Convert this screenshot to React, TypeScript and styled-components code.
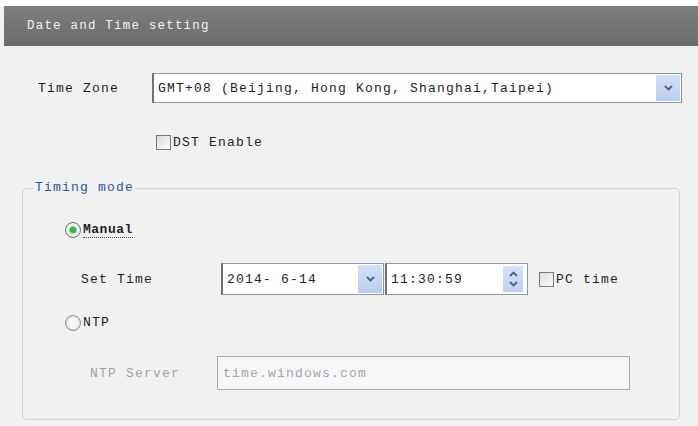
import styled, { createGlobalStyle } from 'styled-components';

const GlobalStyle = createGlobalStyle`
  html, body {
    margin: 0;
    background: #f1f1f1;
  }
  body {
    font-family: "Liberation Mono", "DejaVu Sans Mono", monospace;
    font-size: 13px;
    letter-spacing: 1.2px;
    color: #1e1e1e;
  }
`;

const Page = styled.div`
  width: 698px;
  height: 426px;
  padding-top: 6px;
  box-sizing: border-box;
  background: linear-gradient(#ffffff 0 6px, #f1f1f1 6px);
  overflow: hidden;
`;

const TitleBar = styled.div`
  margin-left: 4px;
  height: 40px;
  padding-left: 23px;
  display: flex;
  align-items: center;
  background: linear-gradient(#7e7e7e, #6b6b6b);
  color: #f2f2f2;
  font-size: 12.5px;
`;

const Row = styled.div<{ $indent: number; $top: number; $height: number }>`
  display: flex;
  align-items: center;
  margin-top: ${(p) => p.$top}px;
  padding-left: ${(p) => p.$indent}px;
  height: ${(p) => p.$height}px;
`;

const Label = styled.span<{ $width: number; $muted?: boolean }>`
  width: ${(p) => p.$width}px;
  flex: none;
  color: ${(p) => (p.$muted ? '#a3a3a3' : '#1e1e1e')};
  white-space: nowrap;
`;

const Combo = styled.div<{ $width: number }>`
  width: ${(p) => p.$width}px;
  height: 100%;
  box-sizing: border-box;
  display: flex;
  align-items: stretch;
  background: #fff;
  border: 1px solid #8c96a3;
  border-left: 2px solid #6f7378;
`;

const ComboText = styled.span`
  flex: 1;
  display: flex;
  align-items: center;
  padding-left: 4px;
  white-space: nowrap;
  overflow: hidden;
`;

const ArrowButton = styled.span`
  width: 24px;
  flex: none;
  margin: 1px;
  display: flex;
  align-items: center;
  justify-content: center;
  background: linear-gradient(#d4e1f7, #b9cdf0);
  color: #4d6185;
`;

const SpinButton = styled.span`
  width: 20px;
  flex: none;
  margin: 2px 4px 2px 0;
  display: flex;
  flex-direction: column;
  align-items: center;
  justify-content: space-evenly;
  background: linear-gradient(#d7e3f8, #bccff0);
  color: #4d6185;
`;

const Box = styled.span`
  width: 15px;
  height: 15px;
  flex: none;
  box-sizing: border-box;
  border: 1px solid #737b86;
  background: linear-gradient(135deg, #dcdcdc, #fbfbfb);
  margin-right: 2px;
`;

const Radio = styled.span<{ $checked?: boolean }>`
  width: 16px;
  height: 16px;
  flex: none;
  box-sizing: border-box;
  border-radius: 50%;
  border: 1px solid ${(p) => (p.$checked ? '#5b6f86' : '#8d8d8d')};
  background: radial-gradient(circle, ${(p) => (p.$checked ? '#3cb04a 0 3px, #e9f2ea 4px' : '#f7f7f7 0 4px, #dadada 8px')});
  margin-right: 2px;
`;

const Choice = styled.span<{ $focused?: boolean }>`
  font-weight: ${(p) => (p.$focused ? 'bold' : 'normal')};
  letter-spacing: ${(p) => (p.$focused ? '0.5px' : '1.2px')};
  border-bottom: 1px dotted ${(p) => (p.$focused ? '#444' : 'transparent')};
  line-height: 15px;
`;

const Group = styled.fieldset`
  margin: 30px 0 0 22px;
  width: 658px;
  box-sizing: border-box;
  padding: 0 0 29px 0;
  border: 1px solid #d3d3d3;
  border-radius: 5px;
`;

const Legend = styled.legend`
  margin-left: 11px;
  padding: 0 1px;
  color: #2b56a5;
  line-height: 16px;
`;

const TextInput = styled.div<{ $width: number }>`
  width: ${(p) => p.$width}px;
  height: 100%;
  box-sizing: border-box;
  padding-left: 5px;
  display: flex;
  align-items: center;
  border: 1px solid #a4adb8;
  background: #f6f7f8;
  color: #a6a6a6;
`;

const Chevron = ({ up }: { up?: boolean }) => (
  <svg width="9" height="6" viewBox="0 0 9 6">
    <path
      d={up ? 'M1 5 L4.5 1.5 L8 5' : 'M1 1 L4.5 4.5 L8 1'}
      fill="none"
      stroke="currentColor"
      strokeWidth="1.8"
    />
  </svg>
);

export default function App() {
  return (
    <Page>
      <GlobalStyle />
      <TitleBar>Date and Time setting</TitleBar>

      <Row $indent={38} $top={27} $height={30}>
        <Label $width={114}>Time Zone</Label>
        <Combo $width={530}>
          <ComboText>GMT+08 (Beijing, Hong Kong, Shanghai,Taipei)</ComboText>
          <ArrowButton>
            <Chevron />
          </ArrowButton>
        </Combo>
      </Row>

      <Row $indent={156} $top={31} $height={16}>
        <Box />
        <span>DST Enable</span>
      </Row>

      <Group>
        <Legend>Timing mode</Legend>

        <Row $indent={42} $top={26} $height={16}>
          <Radio $checked />
          <Choice $focused>Manual</Choice>
        </Row>

        <Row $indent={58} $top={25} $height={32}>
          <Label $width={140}>Set Time</Label>
          <Combo $width={163}>
            <ComboText>2014- 6-14</ComboText>
            <ArrowButton>
              <Chevron />
            </ArrowButton>
          </Combo>
          <Combo $width={143} style={{ marginLeft: 1 }}>
            <ComboText>11:30:59</ComboText>
            <SpinButton>
              <Chevron up />
              <Chevron />
            </SpinButton>
          </Combo>
          <Box style={{ marginLeft: 11 }} />
          <span>PC time</span>
        </Row>

        <Row $indent={42} $top={20} $height={16}>
          <Radio />
          <Choice>NTP</Choice>
        </Row>

        <Row $indent={67} $top={25} $height={34}>
          <Label $width={127} $muted>NTP Server</Label>
          <TextInput $width={413}>time.windows.com</TextInput>
        </Row>
      </Group>
    </Page>
  );
}
